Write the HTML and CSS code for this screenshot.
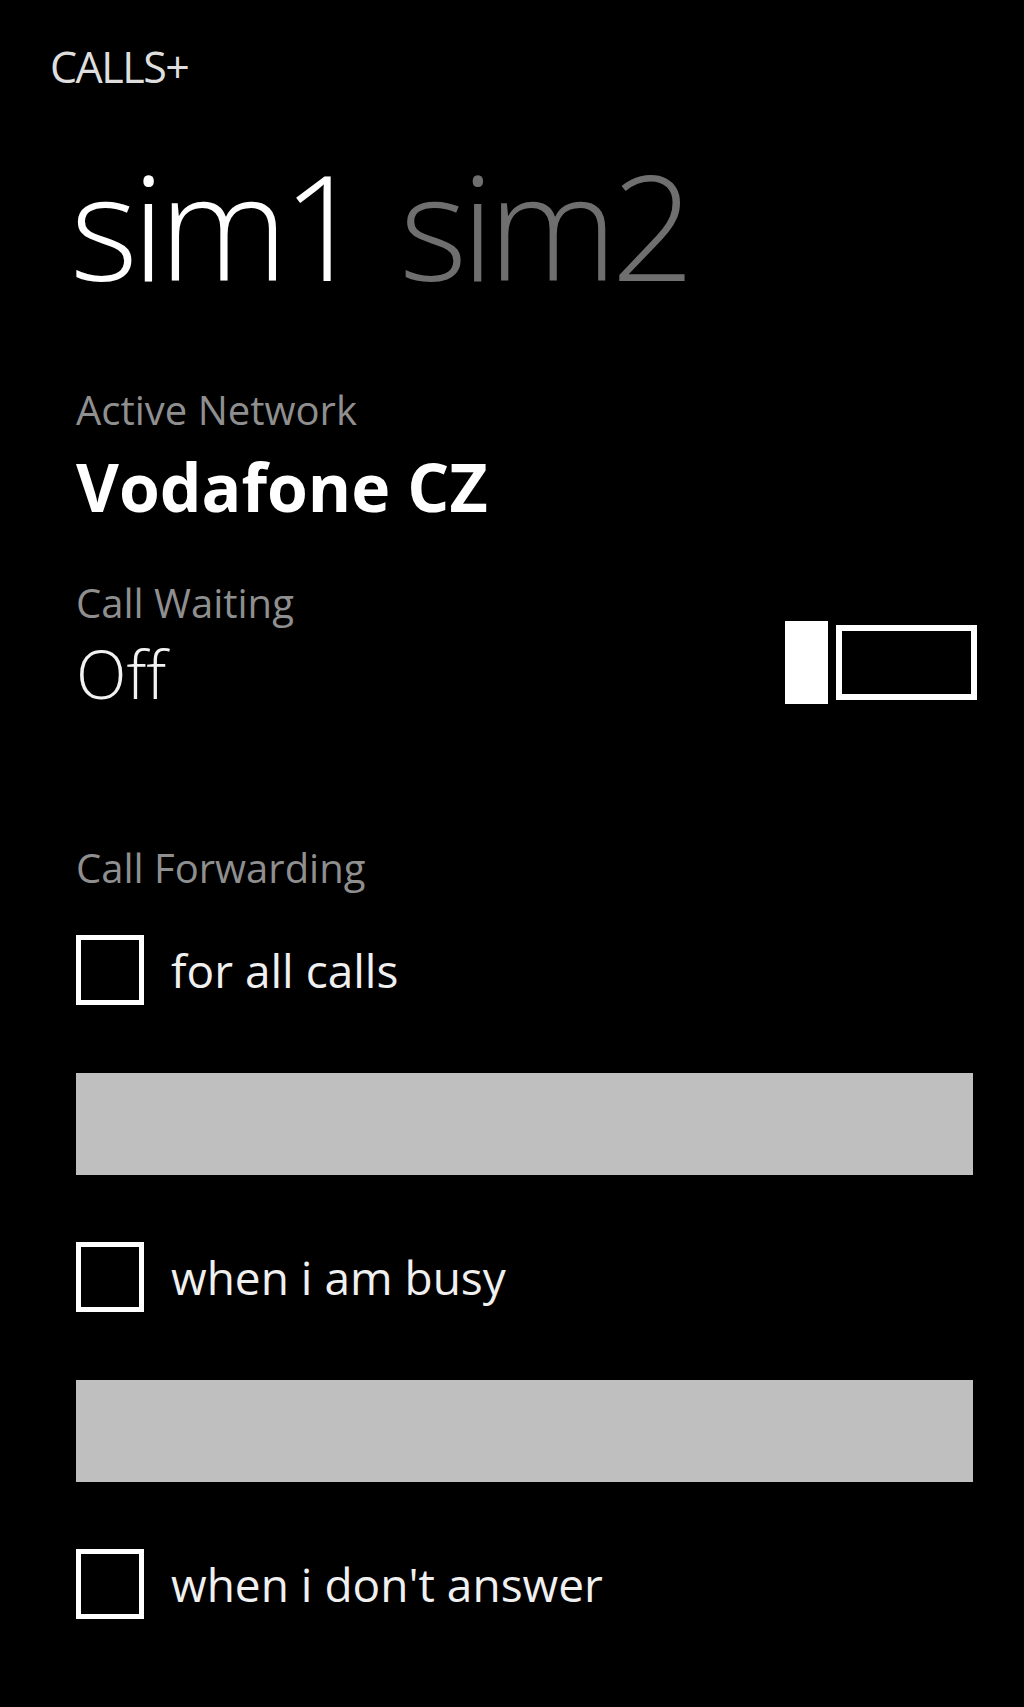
FILE: index.html
```html
<!DOCTYPE html>
<html lang="en">
<head>
<meta charset="utf-8">
<title>Calls+</title>
<link rel="stylesheet" href="styles.css">
</head>
<body>
<div class="app-title">CALLS+</div>
<div class="page">
  <div class="pivot">
    <span class="pivot-item active">sim1</span>
    <span class="pivot-item">sim2</span>
  </div>

  <div class="label first">Active Network</div>
  <div class="network">Vodafone CZ</div>

  <div class="waiting-row">
    <div class="waiting-text">
      <div class="label">Call Waiting</div>
      <div class="state">Off</div>
    </div>
    <div class="toggle">
      <div class="toggle-thumb"></div>
      <div class="toggle-track"></div>
    </div>
  </div>

  <div class="label forwarding">Call Forwarding</div>

  <div class="check-row">
    <span class="checkbox"></span>
    <span class="check-text">for all calls</span>
  </div>
  <div class="number-box"></div>

  <div class="check-row">
    <span class="checkbox"></span>
    <span class="check-text">when i am busy</span>
  </div>
  <div class="number-box"></div>

  <div class="check-row">
    <span class="checkbox"></span>
    <span class="check-text">when i don't answer</span>
  </div>
</div>
</body>
</html>
```

FILE: styles.css
```css
html, body {
  margin: 0;
  padding: 0;
  background: #000;
}

body {
  width: 1024px;
  height: 1707px;
  overflow: hidden;
  font-family: "Open Sans", "Noto Sans", sans-serif;
  color: #fff;
}

.app-title {
  margin: 46px 0 0 50px;
  font-size: 43px;
  line-height: 42px;
  font-weight: 400;
  letter-spacing: -1.5px;
  color: #dedede;
}

.page {
  padding: 0 47px 0 76px;
}

.pivot {
  display: flex;
  gap: 40px;
  margin-top: 64px;
  margin-left: -6px;
  font-size: 146px;
  line-height: 146px;
  font-weight: 300;
  letter-spacing: -6px;
  color: #6f6f6f;
}

.pivot-item.active {
  color: #fff;
}

.label {
  font-size: 40px;
  line-height: 40px;
  color: #8f8f8f;
}

.label.first {
  margin-top: 92px;
}

.network {
  margin-top: 23px;
  font-size: 66px;
  line-height: 66px;
  font-weight: 700;
  color: #fff;
}

.waiting-row {
  display: flex;
  justify-content: space-between;
  align-items: flex-end;
  margin-top: 64px;
}

.state {
  margin-top: 17px;
  font-size: 66px;
  line-height: 66px;
  font-weight: 300;
  color: #f2f2f2;
}

.toggle {
  display: flex;
  align-items: center;
  gap: 8px;
  margin-bottom: 2px;
}

.toggle-thumb {
  width: 43px;
  height: 83px;
  background: #fff;
}

.toggle-track {
  width: 129px;
  height: 63px;
  border: 6px solid #fff;
}

.label.forwarding {
  margin-top: 142px;
}

.check-row {
  display: flex;
  align-items: center;
  gap: 27px;
  height: 70px;
  margin-top: 47px;
  margin-bottom: 68px;
}

.number-box + .check-row {
  margin-top: 0;
}

.checkbox {
  box-sizing: border-box;
  width: 68px;
  height: 70px;
  border: 5px solid #fff;
}

.check-text {
  font-size: 46px;
  line-height: 46px;
  color: #f0f0f0;
}

.number-box {
  height: 102px;
  margin: 0 4px 67px 0;
  background: #bfbfbf;
}
```
